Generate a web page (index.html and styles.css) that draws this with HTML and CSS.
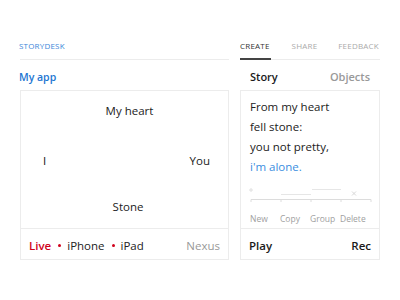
FILE: index.html
```html
<!DOCTYPE html>
<html>
<head>
<meta charset="utf-8">
<link rel="stylesheet" href="styles.css">
</head>
<body>
<div class="page">
  <section class="col col-left">
    <header class="brand-bar"><span class="brand">STORYDESK</span></header>
    <div class="subhead"><span class="app-title">My app</span></div>
    <div class="card">
      <div class="canvas">
        <div class="node node-top">My heart</div>
        <div class="node-row"><span class="n-left">I</span><span>You</span></div>
        <div class="node node-bottom">Stone</div>
      </div>
      <div class="card-foot">
        <span class="devices"><span class="live">Live</span><span class="dot"></span><span>iPhone</span><span class="dot"></span><span>iPad</span></span>
        <span class="muted">Nexus</span>
      </div>
    </div>
  </section>
  <section class="col col-right">
    <nav class="tabs">
      <span class="tab active">CREATE</span>
      <span class="tab">SHARE</span>
      <span class="tab">FEEDBACK</span>
    </nav>
    <div class="subhead split"><span class="strong">Story</span><span class="muted-strong">Objects</span></div>
    <div class="card">
      <div class="story">
        <p>From my heart</p>
        <p>fell stone:</p>
        <p>you not pretty,</p>
        <p class="hl">i'm alone.</p>
        <svg class="timeline" width="122" height="16" viewBox="0 0 122 16">
          <g stroke="#dcdcdc" stroke-width="1" fill="none">
            <path d="M1 12.5H121"/>
            <path d="M1 12.5V15M31 12.5V15M61 12.5V15M91 12.5V15M121 12.5V15"/>
            <path d="M31 7.5H61" stroke="#e6e6e6"/>
            <path d="M62 2.5H91" stroke="#e6e6e6"/>
            <path d="M1 1V5M-1 3H3" stroke="#e0e0e0"/>
            <path d="M102 4.5L106 8.5M106 4.5L102 8.5" stroke="#d8d8d8"/>
          </g>
        </svg>
        <div class="actions"><span>New</span><span>Copy</span><span>Group</span><span>Delete</span></div>
      </div>
      <div class="card-foot">
        <span class="strong">Play</span>
        <span class="strong">Rec</span>
      </div>
    </div>
  </section>
</div>
</body>
</html>
```
FILE: styles.css
```css
html, body {
  margin: 0;
  padding: 0;
  background: #ffffff;
}
body {
  font-family: "Open Sans", "Noto Sans", sans-serif;
  color: #222;
  width: 400px;
  height: 300px;
  overflow: hidden;
}
p { margin: 0; }
.page {
  display: grid;
  grid-template-columns: 209px 140px;
  column-gap: 11px;
  padding: 38px 20px 0 20px;
}
.brand-bar, .tabs {
  height: 21px;
  border-bottom: 1px solid #ececec;
  box-sizing: content-box;
}
.brand {
  display: block;
  font-size: 8px;
  line-height: 16px;
  color: #3d87d9;
  letter-spacing: 0.2px;
  margin-left: -1px;
}
.tabs {
  display: flex;
  font-size: 8px;
  line-height: 16px;
  color: #aaaaaa;
}
.tab {
  height: 20px;
  margin-right: 21px;
  letter-spacing: 0.2px;
}
.tab:last-child { margin-right: 0; }
.tab.active {
  color: #333;
  border-bottom: 2px solid #444;
  padding-right: 1px;
}
.subhead {
  height: 30px;
  line-height: 16px;
  padding-top: 9px;
  box-sizing: border-box;
  font-size: 11px;
  font-weight: 600;
}
.app-title {
  color: #2276d2;
  margin-left: -1px;
  font-size: 10.5px;
}
.subhead.split {
  display: flex;
  justify-content: space-between;
  padding-left: 10px;
  padding-right: 10px;
}
.strong { color: #1a1a1a; font-weight: 600; }
.muted-strong { color: #999; font-weight: 600; }
.card {
  border: 1px solid #ececec;
  height: 168px;
  display: flex;
  flex-direction: column;
}
.canvas {
  height: 138px;
  box-sizing: border-box;
  border-bottom: 1px solid #ececec;
  padding-top: 12px;
  font-size: 11.5px;
  line-height: 16px;
  color: #222;
}
.node {
  text-align: center;
  padding-left: 10px;
}
.node-bottom {
  margin-top: 30px;
  padding-left: 7px;
}
.node-row {
  margin-top: 34px;
  display: flex;
  justify-content: space-between;
  padding: 0 18px 0 22px;
}
.n-left { color: #111; }
.card-foot {
  flex: 1;
  display: flex;
  align-items: center;
  justify-content: space-between;
  padding: 2px 8px 0 8px;
  font-size: 11.5px;
}
.devices { display: flex; align-items: center; }
.live { color: #d0021b; font-weight: 600; }
.dot {
  width: 3px;
  height: 3px;
  border-radius: 50%;
  background: #d0021b;
  margin: 1px 6px 0 7px;
}
.muted { color: #999; }
.story {
  height: 138px;
  box-sizing: border-box;
  border-bottom: 1px solid #ececec;
  padding: 6px 8px 0 9px;
  font-size: 11.5px;
  line-height: 20px;
  color: #222;
}
.hl { color: #3a8ee0; }
.timeline {
  display: block;
  margin-top: 10px;
  margin-left: 0;
  overflow: visible;
}
.actions {
  display: grid;
  grid-template-columns: 30px 30px 30px 30px;
  font-size: 8.5px;
  line-height: 12px;
  color: #a0a0a0;
  margin-top: 10px;
}
```
